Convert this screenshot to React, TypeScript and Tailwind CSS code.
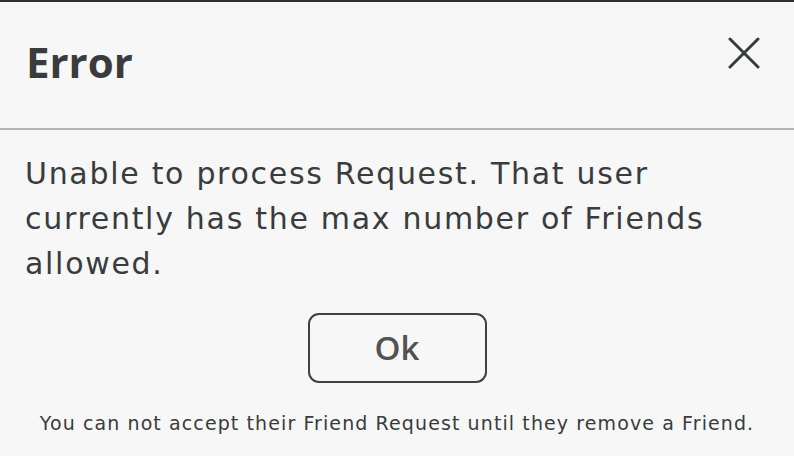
export default function App() {
  return (
    <div
      className="w-[794px] h-[456px] overflow-hidden bg-[#f7f7f7] border-t-2 border-[#2e2e2e] text-[#393b3d]"
      style={{ fontFamily: '"DejaVu Sans", "Liberation Sans", sans-serif' }}
    >
      <div className="h-[126px] flex justify-between pl-[26px] pr-[34px]">
        <h1
          className="mt-[35px] text-[42px] leading-[50px] font-bold"
          style={{ fontFamily: '"Open Sans", sans-serif' }}
        >
          Error
        </h1>
        <button className="mt-[35px] w-[32px] h-[32px] flex items-center justify-center">
          <svg width="32" height="32" viewBox="0 0 32 32" fill="none" stroke="#393b3d" strokeWidth="3" strokeLinecap="round">
            <path d="M2 2 L30 30 M30 2 L2 30" />
          </svg>
        </button>
      </div>
      <div className="h-[2px] bg-[#b3b3b3]" />
      <div className="px-[25px] pt-[21px]">
        <p className="text-[30px] leading-[45px] tracking-[1.7px]">
          Unable to process Request. That user
          <br />
          currently has the max number of Friends
          <br />
          allowed.
        </p>
        <div className="flex justify-center mt-[27px]">
          <button
            className="w-[179px] h-[70px] border-2 border-[#3f4143] rounded-[11px] text-[33px] font-semibold text-[#505253]"
            style={{ fontFamily: '"Open Sans", sans-serif' }}
          >
            Ok
          </button>
        </div>
        <p className="mt-[27px] text-center text-[19px] leading-[26px] tracking-[1.1px]">
          You can not accept their Friend Request until they remove a Friend.
        </p>
      </div>
    </div>
  );
}
